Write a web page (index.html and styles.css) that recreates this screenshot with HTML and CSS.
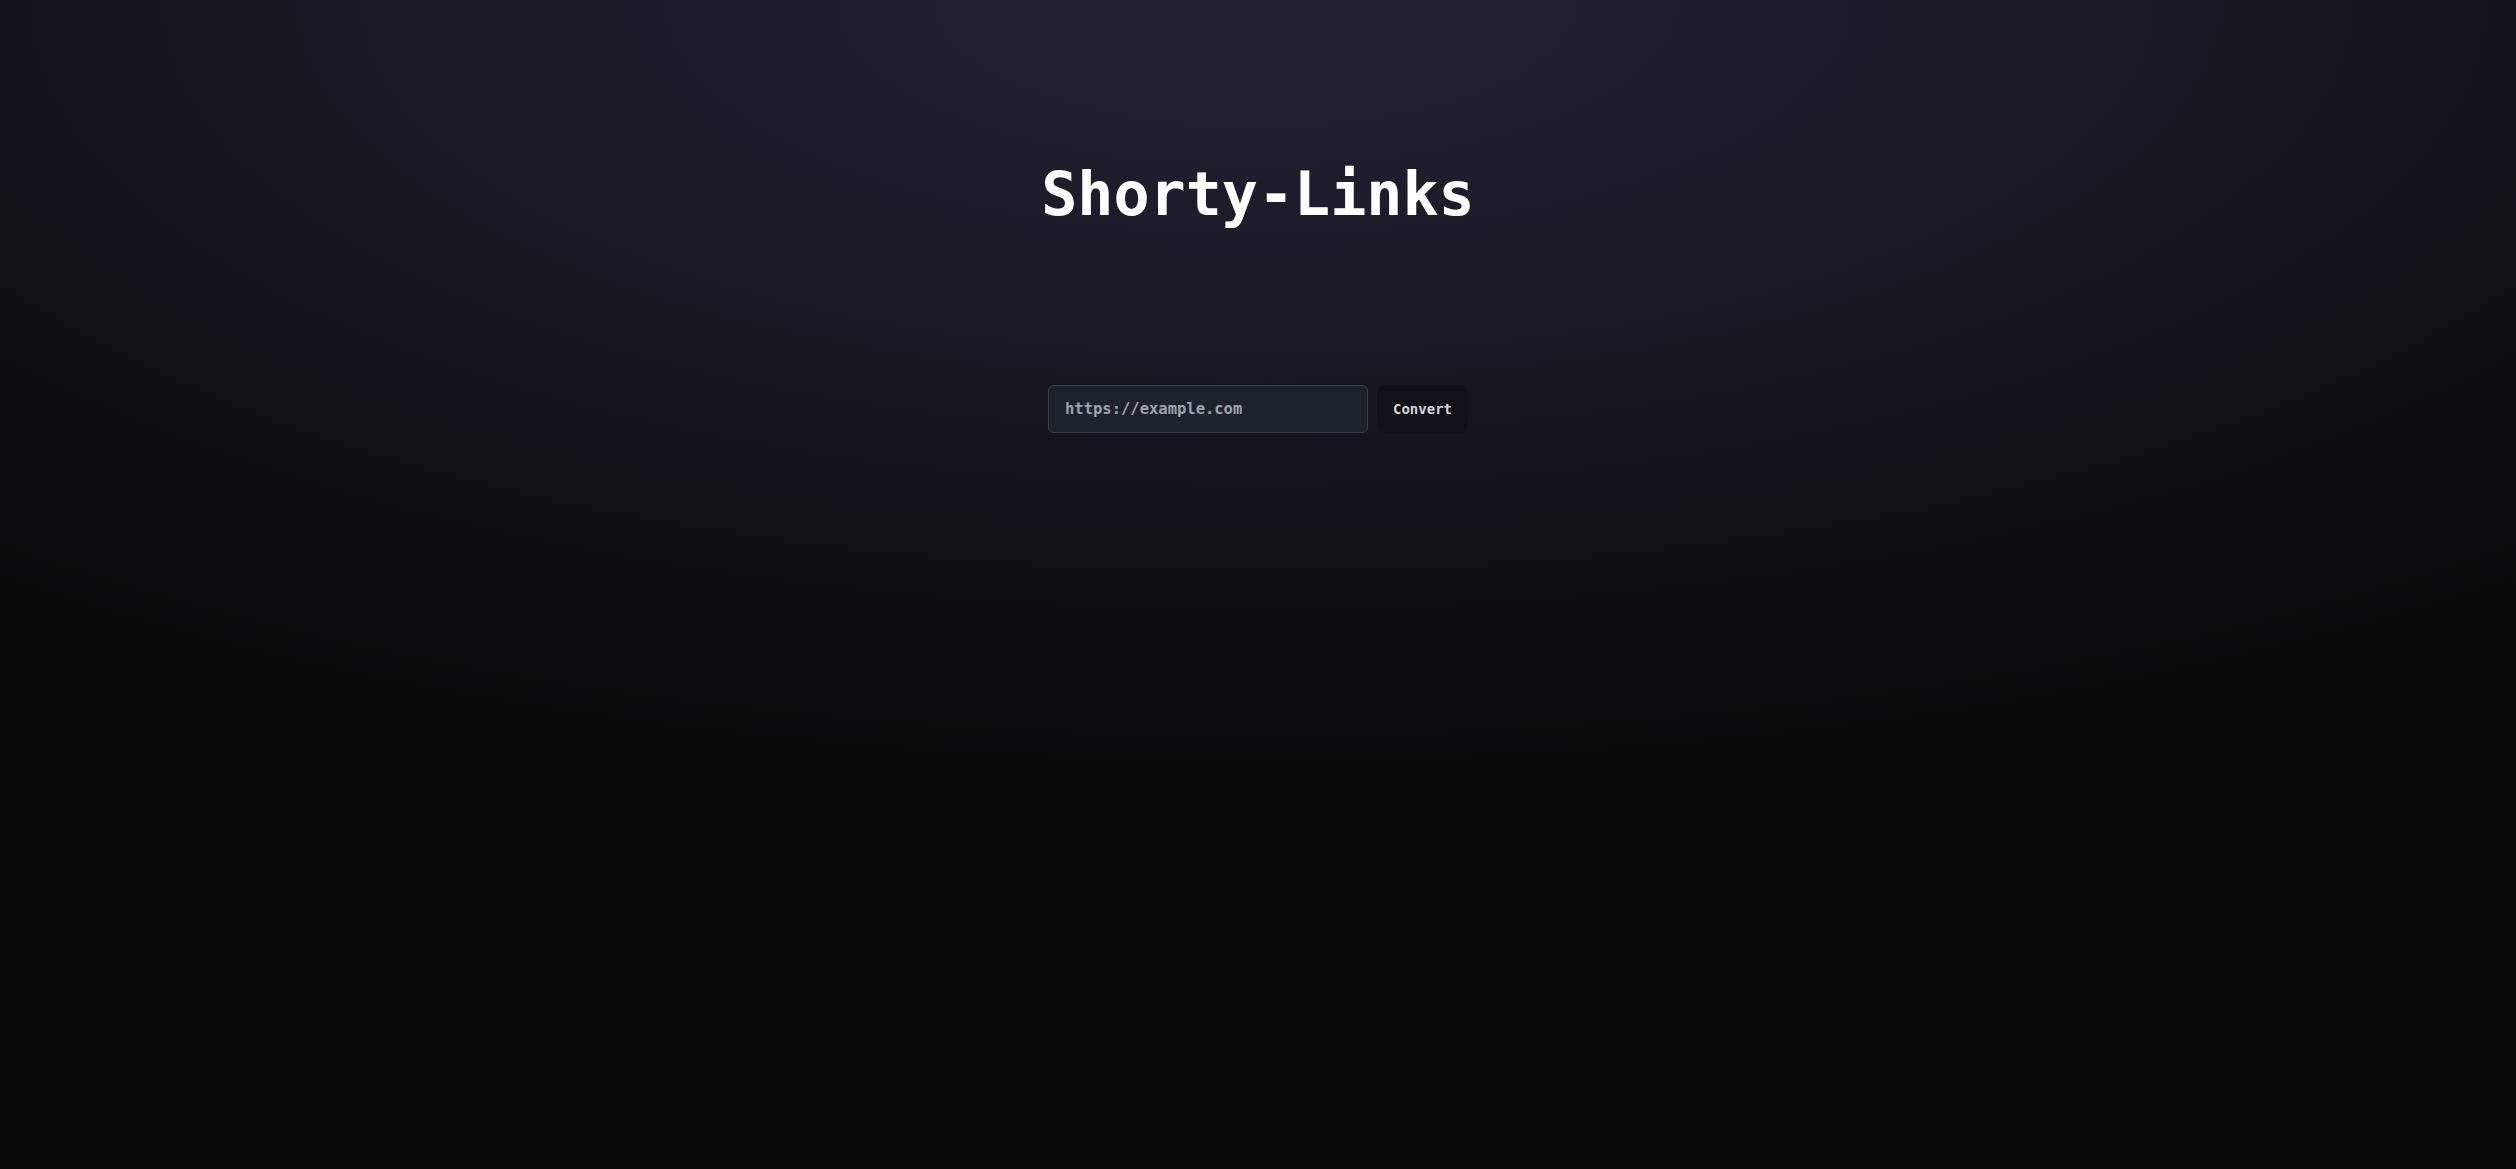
FILE: index.html
```html
<!DOCTYPE html>
<html lang="en">
<head>
<meta charset="utf-8">
<title>Shorty-Links</title>
<link rel="stylesheet" href="styles.css">
</head>
<body>
<main class="page">
  <h1 class="title">Shorty-Links</h1>
  <form class="shorten-form" onsubmit="return false">
    <input class="url-input" type="text" placeholder="https://example.com">
    <button class="convert-btn" type="submit">Convert</button>
  </form>
</main>
</body>
</html>
```
FILE: styles.css
```css
html, body {
  margin: 0;
  padding: 0;
  height: 100%;
}
body {
  background: radial-gradient(ellipse 1950px 770px at 50% 0%, #222134 0%, #1b1b28 35%, #121217 70%, #0a0a0b 100%);
  background-color: #0a0a0b;
  font-family: "DejaVu Sans Mono", "Liberation Mono", monospace;
  color: #ffffff;
}
.page {
  display: flex;
  flex-direction: column;
  align-items: center;
  padding-top: 164px;
}
.title {
  margin: 0;
  font-size: 60px;
  line-height: 60px;
  font-weight: 700;
  color: #ffffff;
}
.shorten-form {
  display: flex;
  gap: 9px;
  margin-top: 161px;
}
.url-input {
  box-sizing: border-box;
  width: 320px;
  height: 48px;
  padding: 0 16px;
  background: #1e232b;
  border: 1px solid #3b404a;
  border-radius: 6px;
  color: #e5e7eb;
  font-family: "DejaVu Sans Mono", "Liberation Mono", monospace;
  font-size: 15.5px;
  font-weight: 700;
  outline: none;
}
.url-input::placeholder {
  color: #9ca3af;
}
.convert-btn {
  box-sizing: border-box;
  height: 48px;
  padding: 0 16px;
  background: #111217;
  border: none;
  border-radius: 8px;
  color: #d1d5db;
  font-family: "DejaVu Sans Mono", "Liberation Mono", monospace;
  font-size: 14px;
  font-weight: 700;
  cursor: pointer;
}
```
